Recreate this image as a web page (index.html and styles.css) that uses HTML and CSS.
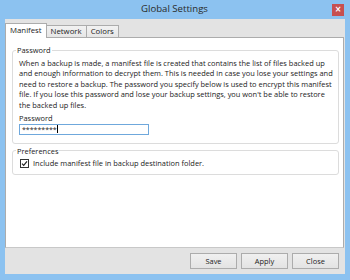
FILE: index.html
```html
<!DOCTYPE html>
<html lang="en">
<head>
    <meta charset="UTF-8">
    <title>Global Settings</title>
    <link rel="stylesheet" href="styles.css">
</head>
<body>
    <div class="window">
        <div class="titlebar">
            <span></span>
            <span class="title">Global Settings</span>
            <button class="close-btn" title="Close">&#215;</button>
        </div>

        <div class="dialog">
            <div class="tabs">
                <div class="tab active">Manifest</div>
                <div class="tab">Network</div>
                <div class="tab">Colors</div>
            </div>

            <div class="tab-page">
                <fieldset class="group">
                    <legend>Password</legend>
                    <p class="info">When a backup is made, a manifest file is created that contains the list of files backed up and enough information to decrypt them. This is needed in case you lose your settings and need to restore a backup. The password you specify below is used to encrypt this manifest file. If you lose this password and lose your backup settings, you won't be able to restore the backed up files.</p>
                    <div class="field-label">Password</div>
                    <div class="pw-box"><span>*********</span><span class="caret"></span></div>
                </fieldset>

                <fieldset class="group">
                    <legend>Preferences</legend>
                    <label class="check-row">
                        <svg class="checkbox" width="9" height="9" viewBox="0 0 9 9">
                            <rect x="0.5" y="0.5" width="8" height="8" fill="#fff" stroke="#333"/>
                            <path d="M2 4.6 L3.7 6.4 L7 2.4" fill="none" stroke="#222" stroke-width="1.2"/>
                        </svg>
                        <span>Include manifest file in backup destination folder.</span>
                    </label>
                </fieldset>
            </div>

            <div class="footer">
                <button class="btn">Save</button>
                <button class="btn">Apply</button>
                <button class="btn">Close</button>
            </div>
        </div>
    </div>
</body>
</html>
```

FILE: styles.css
```css
* {
    box-sizing: border-box;
    margin: 0;
    padding: 0;
}

body {
    font-family: 'Open Sans', 'Noto Sans', sans-serif;
    font-size: 7.45px;
    line-height: 10.5px;
    color: #222;
    background: #8cc2f0;
}

.window {
    width: 350px;
    height: 280px;
    background: #8cc2f0;
    display: flex;
    flex-direction: column;
}

.titlebar {
    height: 19px;
    display: grid;
    grid-template-columns: 1fr auto 1fr;
    align-items: center;
    padding: 0 6px 0 5px;
}

.title {
    font-size: 9.6px;
    color: #2a2a2a;
}

.close-btn {
    justify-self: end;
    align-self: start;
    margin-top: 4px;
    width: 12px;
    height: 12px;
    border: none;
    background: #c75050;
    color: #fff;
    font-family: 'DejaVu Sans', sans-serif;
    font-size: 8px;
    line-height: 12px;
    font-weight: bold;
}

.dialog {
    flex: 1;
    margin: 0 5px 6px 5px;
    background: #e3e3e3;
    display: flex;
    flex-direction: column;
}

.tabs {
    height: 18px;
    display: flex;
    align-items: flex-end;
    position: relative;
    z-index: 1;
}

.tab {
    height: 12px;
    padding: 0 4px;
    border: 1px solid #acacac;
    border-bottom: none;
    background: linear-gradient(#f2f2f2, #e6e6e6);
    font-size: 7.8px;
    line-height: 10px;
    margin-left: -1px;
}

.tab:first-child {
    margin-left: 0;
}

.tab.active {
    height: 15px;
    margin-bottom: -1px;
    background: #fff;
    line-height: 12px;
}

.tab-page {
    flex: 1;
    background: #fff;
    border: 1px solid #acacac;
    border-bottom-color: #c8c8c8;
    margin-right: 1px;
    padding: 7px 4px 0 6px;
}

.group {
    border: 1px solid #dcdcdc;
    border-radius: 3px;
    padding: 0 5px 8px 6px;
}

.group + .group {
    margin-top: 2px;
    padding-bottom: 5px;
}

.group legend {
    margin-left: -3px;
    padding: 0 1px;
}

.info {
    margin-top: 2px;
}

.field-label {
    margin-top: 3px;
}

.pw-box {
    width: 130px;
    height: 11px;
    border: 1px solid #6fa8dc;
    display: flex;
    align-items: center;
    padding-left: 2px;
    line-height: 9px;
    font-size: 7px;
}

.caret {
    width: 1px;
    height: 8px;
    background: #000;
}

.check-row {
    display: flex;
    align-items: center;
    gap: 4px;
    margin-top: 2px;
    padding-left: 1px;
}

.checkbox {
    flex-shrink: 0;
}

.footer {
    height: 26px;
    display: flex;
    justify-content: flex-end;
    align-items: center;
    gap: 4px;
    padding-right: 6px;
}

.btn {
    width: 47px;
    height: 16px;
    border: 1px solid #acacac;
    background: linear-gradient(#f0f0f0, #e3e3e3);
    font-family: inherit;
    font-size: 7.45px;
    color: #222;
}
```
